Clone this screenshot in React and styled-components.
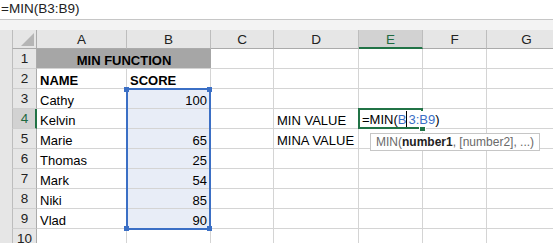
import React from "react";
import styled, { createGlobalStyle } from "styled-components";

const GlobalStyle = createGlobalStyle`
  body {
    margin: 0;
    background: #fff;
    font-family: "Liberation Sans", Arial, sans-serif;
  }
`;

const COLS = ["A", "B", "C", "D", "E", "F", "G"];
const ACTIVE_ROW = 4;
const ACTIVE_COL = "E";

const rows = [
  { n: 1 },
  { n: 2, cells: { A: { t: "NAME", bold: true }, B: { t: "SCORE", bold: true } } },
  { n: 3, cells: { A: { t: "Cathy" }, B: { t: "100", right: true } } },
  { n: 4, cells: { A: { t: "Kelvin" }, D: { t: "MIN VALUE" } } },
  { n: 5, cells: { A: { t: "Marie" }, B: { t: "65", right: true }, D: { t: "MINA VALUE" } } },
  { n: 6, cells: { A: { t: "Thomas" }, B: { t: "25", right: true } } },
  { n: 7, cells: { A: { t: "Mark" }, B: { t: "54", right: true } } },
  { n: 8, cells: { A: { t: "Niki" }, B: { t: "85", right: true } } },
  { n: 9, cells: { A: { t: "Vlad" }, B: { t: "90", right: true } } },
  { n: 10 },
];

const Window = styled.div`
  width: 553px;
  height: 243px;
  overflow: hidden;
  display: flex;
  flex-direction: column;
`;

const FormulaBar = styled.div`
  flex: none;
  height: 19px;
  background: #fff;
  border-bottom: 1px solid #c6c6c6;
  padding-left: 1px;
  font-size: 13.5px;
  line-height: 17px;
  color: #222;
`;

const Band = styled.div`
  flex: none;
  height: 10px;
  background: #f3f3f3;
`;

const Workspace = styled.div`
  flex: none;
  display: flex;
  background: #e6e6e6;
`;

const LeftStrip = styled.div`
  width: 12px;
  flex: none;
`;

// every item gets its own row/column so the selection overlay can share cells
const Sheet = styled.div`
  display: grid;
  grid-template-columns: 25px 90px 84px 63px 85px 64px 64px 80px;
  grid-template-rows: 19px repeat(10, 20px);
  background: #fff;
  font-size: 13px;
  color: #000;
`;

const Corner = styled.div`
  grid-row: 1;
  grid-column: 1;
  position: relative;
  box-sizing: border-box;
  background: #e6e6e6;
  border-left: 1px solid #bdbdbd;
  border-right: 1px solid #ababab;
  border-bottom: 1px solid #ababab;

  &::after {
    content: "";
    position: absolute;
    right: 2px;
    bottom: 2px;
    width: 0;
    height: 0;
    border-left: 13px solid transparent;
    border-bottom: 13px solid #b5b5b5;
  }
`;

const ColHead = styled.div`
  grid-row: 1;
  grid-column: ${(p) => p.$c};
  box-sizing: border-box;
  background: ${(p) => (p.$active ? "#d2d2d2" : "#e6e6e6")};
  border-right: 1px solid #bdbdbd;
  border-bottom: ${(p) => (p.$active ? "2px solid #217346" : "1px solid #ababab")};
  display: flex;
  align-items: center;
  justify-content: center;
  padding-top: ${(p) => (p.$active ? "1px" : "0")};
  font-size: 13.5px;
  color: ${(p) => (p.$active ? "#1e6a41" : "#222")};
`;

const RowHead = styled.div`
  grid-row: ${(p) => p.$r};
  grid-column: 1;
  box-sizing: border-box;
  background: ${(p) => (p.$active ? "#d2d2d2" : "#e6e6e6")};
  border-left: 1px solid #bdbdbd;
  border-right: ${(p) => (p.$active ? "2px solid #217346" : "1px solid #ababab")};
  border-bottom: 1px solid #cfcfcf;
  display: flex;
  align-items: center;
  justify-content: center;
  padding-left: ${(p) => (p.$active ? "1px" : "0")};
  font-size: 13.5px;
  color: ${(p) => (p.$active ? "#1e6a41" : "#222")};
`;

const Cell = styled.div`
  grid-row: ${(p) => p.$r};
  grid-column: ${(p) => p.$c};
  box-sizing: border-box;
  border-right: 1px solid #d4d4d4;
  border-bottom: 1px solid #d4d4d4;
  background: ${(p) => (p.$sel ? "#e8edf7" : "transparent")};
  display: flex;
  align-items: flex-end;
  justify-content: ${(p) => (p.$right ? "flex-end" : "flex-start")};
  padding: 0 3px;
  line-height: 14px;
  font-weight: ${(p) => (p.$bold ? 700 : 400)};
  white-space: nowrap;
`;

const Title = styled.div`
  grid-row: 2;
  grid-column: 2 / 4;
  box-sizing: border-box;
  background: #a6a6a6;
  border-bottom: 1px solid #d4d4d4;
  display: flex;
  align-items: flex-end;
  justify-content: center;
  line-height: 14px;
  font-weight: 700;
`;

const ActiveCell = styled(Cell)`
  position: relative;
  z-index: 3;
  padding-bottom: 1px;

  &::before {
    content: "";
    position: absolute;
    left: -1px;
    top: -1px;
    right: -1px;
    bottom: -1px;
    border: 2px solid #217346;
  }
`;

/* the in-cell editor: white box that runs over the right edge of the cell */
const Editor = styled.span`
  position: relative;
  z-index: 1;
  background: #fff;
  padding-right: 1px;
`;

const Ref = styled.span`
  color: #3b6fc5;
`;

const Caret = styled.span`
  display: inline-block;
  width: 0;
  height: 16px;
  border-left: 1px solid #000;
  margin: 0 1px -3px 0;
  vertical-align: baseline;
`;

const FillHandle = styled.span`
  position: absolute;
  right: -4px;
  bottom: -4px;
  width: 5px;
  height: 5px;
  background: #217346;
  border: 1px solid #fff;
`;

const Tooltip = styled.div`
  position: absolute;
  left: 11px;
  top: 24px;
  z-index: 4;
  box-sizing: border-box;
  height: 18px;
  padding: 0 5px;
  background: #fff;
  border: 1px solid #c6c6c6;
  font-size: 12px;
  line-height: 16px;
  color: #6a6a6a;
  white-space: nowrap;

  b {
    color: #222;
  }
`;

const Selection = styled.div`
  grid-column: 3;
  grid-row: 4 / 11;
  position: relative;
  z-index: 2;
  margin: -1px 0 -1px -1px;
  border: 2px solid #3b6fc5;
  pointer-events: none;
`;

const Handle = styled.span`
  position: absolute;
  width: 5px;
  height: 5px;
  background: #3b6fc5;
  ${(p) => (p.$top ? "top: -3px;" : "bottom: -3px;")}
  ${(p) => (p.$left ? "left: -4px;" : "right: -3px;")}
`;

export default function App() {
  return (
    <>
      <GlobalStyle />
      <Window>
        <FormulaBar>=MIN(B3:B9)</FormulaBar>
        <Band />
        <Workspace>
          <LeftStrip />
          <Sheet>
            <Corner />
            {COLS.map((c, i) => (
              <ColHead key={c} $c={i + 2} $active={c === ACTIVE_COL}>
                {c}
              </ColHead>
            ))}

            {rows.map((row) => {
              const r = row.n + 1;
              return (
                <React.Fragment key={row.n}>
                  <RowHead $r={r} $active={row.n === ACTIVE_ROW}>
                    {row.n}
                  </RowHead>
                  {row.n === 1 && <Title>MIN FUNCTION</Title>}
                  {COLS.map((c, i) => {
                    if (row.n === 1 && (c === "A" || c === "B")) return null;
                    const cell = (row.cells && row.cells[c]) || {};
                    const sel = c === "B" && row.n >= 3 && row.n <= 9;
                    if (row.n === ACTIVE_ROW && c === ACTIVE_COL) {
                      return (
                        <ActiveCell key={c} $r={r} $c={i + 2}>
                          <Editor>
                            =MIN(<Ref>B<Caret />3:B9</Ref>)
                          </Editor>
                          <FillHandle />
                          <Tooltip>
                            MIN(<b>number1</b>, [number2], ...)
                          </Tooltip>
                        </ActiveCell>
                      );
                    }
                    return (
                      <Cell key={c} $r={r} $c={i + 2} $sel={sel} $bold={cell.bold} $right={cell.right}>
                        {cell.t}
                      </Cell>
                    );
                  })}
                </React.Fragment>
              );
            })}

            <Selection>
              <Handle $top $left />
              <Handle $top />
              <Handle $left />
              <Handle />
            </Selection>
          </Sheet>
        </Workspace>
      </Window>
    </>
  );
}
